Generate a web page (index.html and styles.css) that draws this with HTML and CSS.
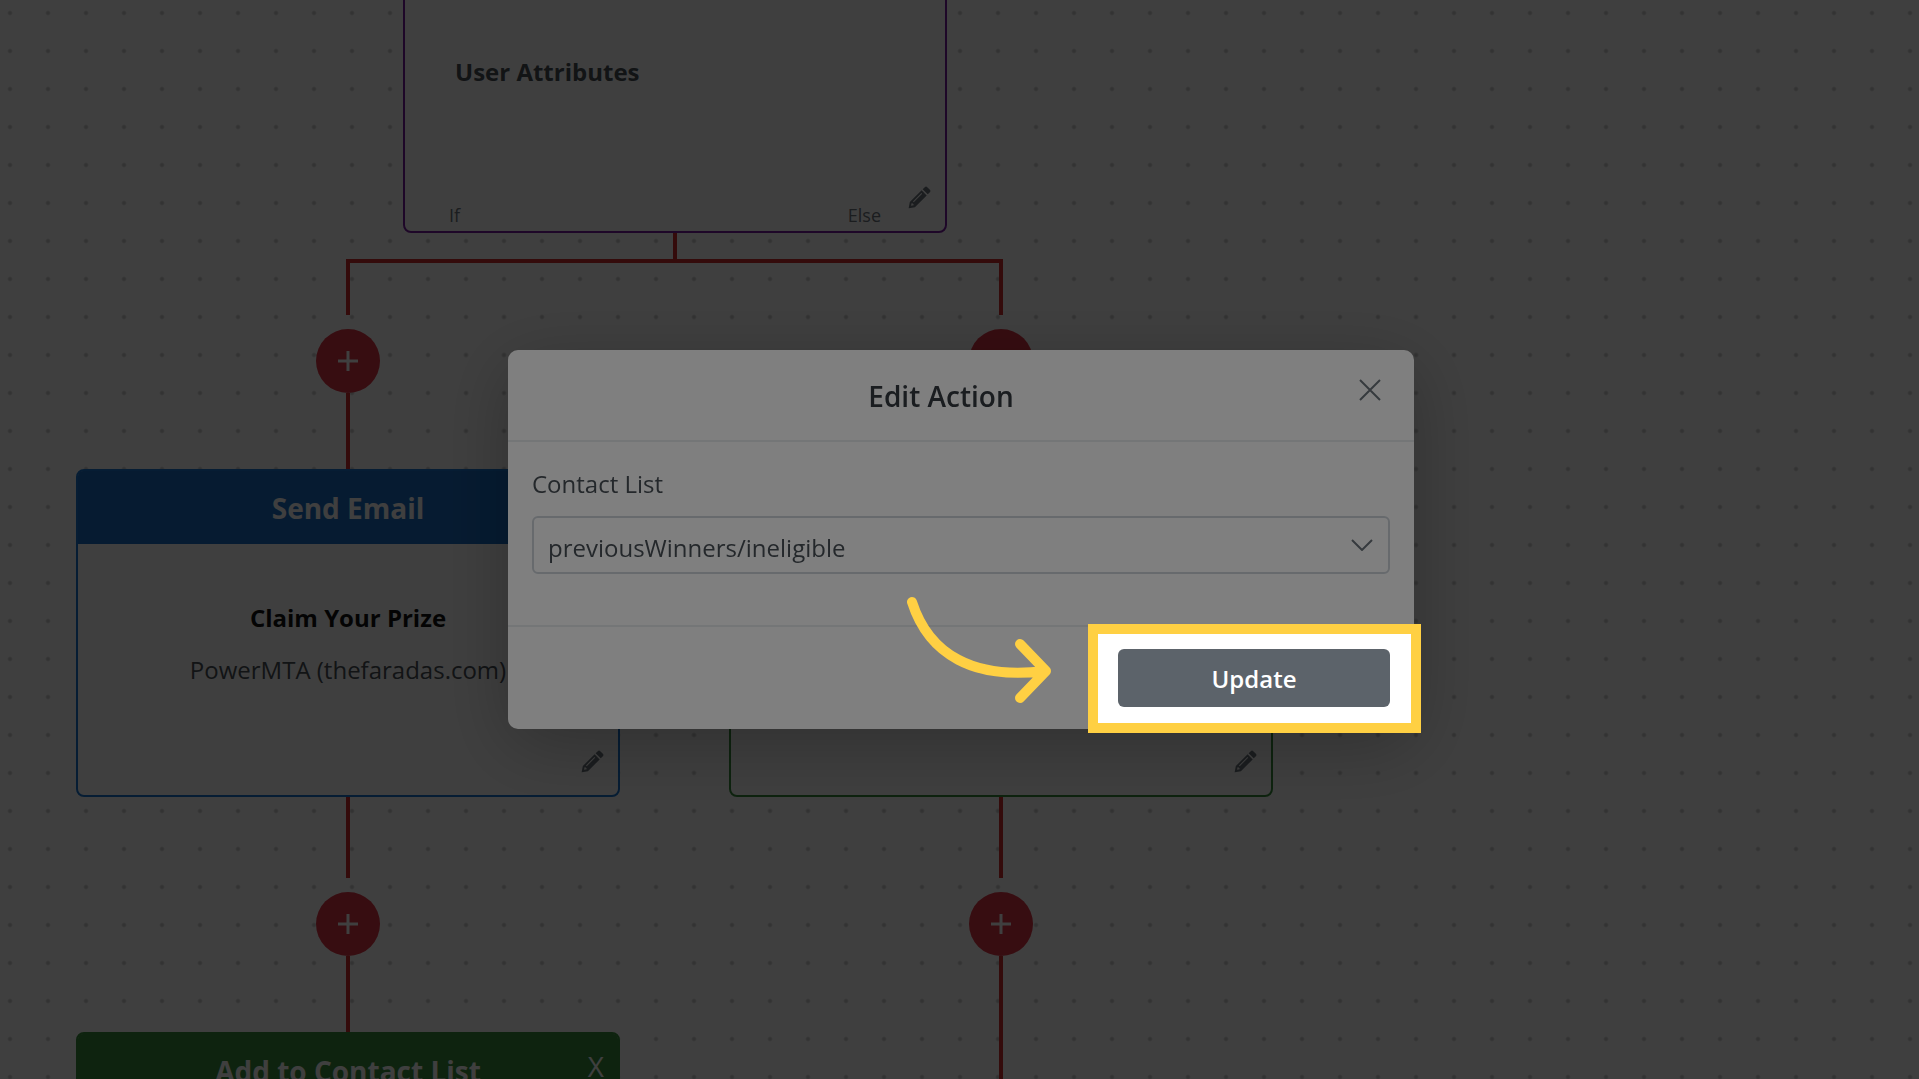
FILE: index.html
```
<!DOCTYPE html>
<html lang="en">
<head>
    <meta charset="UTF-8">
    <meta name="viewport" content="width=device-width, initial-scale=1.0">
    <title>Edit Action</title>
    <link rel="stylesheet" href="styles.css">
</head>
<body>
    <svg class="icon-defs" aria-hidden="true">
        <symbol id="icon-pencil" viewBox="0 0 24 24">
            <path fill-rule="evenodd" d="M17.5 1.2c.8-.8 1.8-.8 2.6 0l2.7 2.7c.8.8.8 1.8 0 2.6L20.600 8.700 15.300 3.400zM14.200 4.500l5.300 5.300L7.200 22.100 1 23.300c-.3 0-.4-.1-.3-.4L1.900 16.800zM14 7.300L5.200 16.100l.8.800 8.800-8.800zM3.700 18l-.5 2.700 2.700-.5v-1.200H4.900V18z"/>
        </symbol>
        <symbol id="icon-plus" viewBox="0 0 22 22">
            <path d="M11 1v20M1 11h20" fill="none" stroke="currentColor" stroke-width="3"/>
        </symbol>
    </svg>

    <main class="canvas">
        <section class="node condition">
            <div class="node-header"></div>
            <h3 class="condition-title">User Attributes</h3>
            <div class="outcomes">
                <span>If</span>
                <span>Else</span>
            </div>
            <button class="edit-button" aria-label="Edit"><svg><use href="#icon-pencil"/></svg></button>
        </section>

        <div class="fork-stem"></div>
        <div class="fork"></div>

        <div class="branch branch-if">
            <button class="add-button" aria-label="Add step"><svg><use href="#icon-plus"/></svg></button>
            <div class="line"></div>
            <section class="node email">
                <h2 class="node-header">Send Email</h2>
                <div class="node-body">
                    <h3>Claim Your Prize</h3>
                    <p>PowerMTA (thefaradas.com)</p>
                </div>
                <button class="edit-button" aria-label="Edit"><svg><use href="#icon-pencil"/></svg></button>
            </section>
            <div class="line line-gap"></div>
            <button class="add-button" aria-label="Add step"><svg><use href="#icon-plus"/></svg></button>
            <div class="line"></div>
            <section class="node list">
                <h2 class="node-header">Add to Contact List</h2>
                <button class="remove-button" aria-label="Remove">X</button>
            </section>
        </div>

        <div class="branch branch-else">
            <button class="add-button" aria-label="Add step"><svg><use href="#icon-plus"/></svg></button>
            <div class="line"></div>
            <section class="node list">
                <div class="node-header"></div>
                <button class="edit-button" aria-label="Edit"><svg><use href="#icon-pencil"/></svg></button>
            </section>
            <div class="line line-gap"></div>
            <button class="add-button" aria-label="Add step"><svg><use href="#icon-plus"/></svg></button>
            <div class="line line-long"></div>
        </div>
    </main>

    <div class="backdrop">
        <form class="modal" role="dialog" aria-labelledby="modal-title">
            <header class="modal-header">
                <h1 id="modal-title">Edit Action</h1>
                <button type="button" class="close-button" aria-label="Close">
                    <svg viewBox="0 0 24 24"><path d="M2 2l20 20M22 2L2 22" fill="none" stroke="currentColor" stroke-width="2"/></svg>
                </button>
            </header>
            <div class="modal-body">
                <label for="contact-list">Contact List</label>
                <div class="select-box">
                    <select id="contact-list">
                        <option>previousWinners/ineligible</option>
                    </select>
                    <svg viewBox="0 0 22 12"><path d="M1 1l10 10L21 1" fill="none" stroke="currentColor" stroke-width="2"/></svg>
                </div>
            </div>
            <footer class="modal-footer">
                <div class="update-box">
                    <button type="button" class="update-button">Update</button>
                    <div class="spotlight"></div>
                    <svg class="arrow" viewBox="0 0 152 114">
                        <path d="M10 10C27 63 72 88 143 79M118 52l26 27-26 27" fill="none" stroke="currentColor" stroke-width="10" stroke-linecap="round" stroke-linejoin="round"/>
                    </svg>
                </div>
            </footer>
        </form>
    </div>
</body>
</html>
```

FILE: styles.css
```
* {
    box-sizing: border-box;
}
body {
    margin: 0;
    font-family: "Open Sans", "Noto Sans", sans-serif;
    font-size: 24px;
    color: #495057;
    overflow: hidden;
}
h1, h2, h3, p {
    margin: 0;
}
button, select {
    font-family: inherit;
    font-size: inherit;
    padding: 0;
    border: none;
    background: none;
}
.icon-defs {
    display: none;
}

/* workflow canvas */
.canvas {
    position: relative;
    height: 100vh;
    overflow: hidden;
    background-color: #fff;
    background-image: radial-gradient(circle, #ccc 1px, transparent 3px);
    background-size: 38px 38px;
    background-position: -9px -6px;
}
.node {
    position: relative;
    width: 544px;
    height: 328px;
    background-color: #fff;
    border: 2px solid;
    border-radius: 8px;
    flex-shrink: 0;
}
.node-header {
    height: 73px;
    line-height: 75px;
    font-size: 28px;
    font-weight: 700;
    text-align: center;
    color: #fff;
    border-radius: 5px 5px 0 0;
}
.node-body {
    padding-top: 56px;
    text-align: center;
    line-height: 36px;
}
.node-body h3 {
    font-size: 24px;
    color: #111;
    margin-bottom: 16px;
}
.email {
    border-color: #1976d2;
}
.email .node-header {
    background-color: #196ec6;
}
.list {
    border-color: #388e3c;
}
.list .node-header {
    background-color: #388e3c;
}
.condition {
    position: absolute;
    left: 403px;
    top: -95px;
    border-color: #7b1fa2;
}
.condition-title {
    padding: 74px 50px 0;
    font-size: 24px;
    line-height: 36px;
}
.outcomes {
    position: absolute;
    left: 44px;
    right: 64px;
    bottom: 2px;
    display: flex;
    justify-content: space-between;
    font-size: 18px;
    line-height: 28px;
    color: #6c757d;
}
.edit-button {
    position: absolute;
    right: 14px;
    bottom: 22px;
    width: 23px;
    height: 23px;
    color: #6c757d;
}
.edit-button svg {
    display: block;
    width: 100%;
    height: 100%;
    fill: currentColor;
}
.remove-button {
    position: absolute;
    right: 14px;
    top: 14px;
    color: #fff;
    font-size: 28px;
    line-height: 36px;
}
.branch {
    position: absolute;
    top: 329px;
    display: flex;
    flex-direction: column;
    align-items: center;
}
.branch-if {
    left: 76px;
}
.branch-else {
    left: 729px;
}
.add-button {
    display: flex;
    align-items: center;
    justify-content: center;
    width: 64px;
    height: 64px;
    border-radius: 50%;
    background-color: #dc3545;
    color: #fff;
    flex-shrink: 0;
}
.add-button svg {
    width: 22px;
    height: 22px;
}
.line {
    width: 4px;
    height: 76px;
    background-color: #d32f2f;
}
.line-gap {
    height: 81px;
    margin-bottom: 14px;
}
.line-long {
    height: 200px;
}
.fork-stem {
    position: absolute;
    left: 673px;
    top: 233px;
    width: 4px;
    height: 26px;
    background-color: #d32f2f;
}
.fork {
    position: absolute;
    left: 346px;
    top: 259px;
    width: 657px;
    height: 56px;
    border: 4px solid #d32f2f;
    border-bottom: none;
}

/* dialog */
.backdrop {
    position: fixed;
    inset: 0;
    display: flex;
    align-items: center;
    justify-content: center;
    padding-left: 3px;
    background-color: rgba(0, 0, 0, 0.5);
}
.modal {
    width: 906px;
    background-color: #fff;
    border-radius: 10px;
    box-shadow: 0 16px 72px rgba(0, 0, 0, 0.25);
}
.modal-header {
    display: flex;
    gap: 8px;
    padding: 28px 32px 26px 24px;
    border-bottom: 2px solid #e9ecef;
}
.modal-header h1 {
    flex: 1;
    text-align: center;
    font-size: 28px;
    font-weight: 600;
    line-height: 36px;
    color: #343a40;
}
.close-button {
    width: 24px;
    height: 24px;
}
.close-button svg {
    display: block;
}
.close-button, .select-box {
    color: #6c757d;
}
.modal-body {
    padding: 24px 24px 51px;
}
.modal-body label {
    display: block;
    line-height: 36px;
    margin-bottom: 14px;
}
.select-box {
    position: relative;
}
.select-box select {
    width: 100%;
    height: 58px;
    padding: 4px 14px 0;
    border: 2px solid #ced4da;
    border-radius: 6px;
    background-color: #fff;
    color: #495057;
    appearance: none;
}
.select-box svg {
    position: absolute;
    right: 17px;
    top: 23px;
    width: 22px;
    height: 12px;
    pointer-events: none;
}
.modal-footer {
    display: flex;
    justify-content: flex-end;
    padding: 22px 24px;
    border-top: 2px solid #e9ecef;
}
.update-box {
    position: relative;
}
.update-button {
    display: block;
    width: 272px;
    height: 58px;
    border-radius: 6px;
    background-color: #5c636a;
    color: #fff;
    font-weight: 600;
}

/* highlight that dims everything except the button */
.spotlight {
    position: absolute;
    inset: -25px -31px -26px -30px;
    border: 10px solid #ffd043;
    box-shadow: 0 0 0 3000px rgba(0, 0, 0, 0.5);
    pointer-events: none;
}
.arrow {
    position: absolute;
    right: 336px;
    bottom: 1px;
    width: 152px;
    height: 114px;
    color: #ffd043;
    pointer-events: none;
}
```
